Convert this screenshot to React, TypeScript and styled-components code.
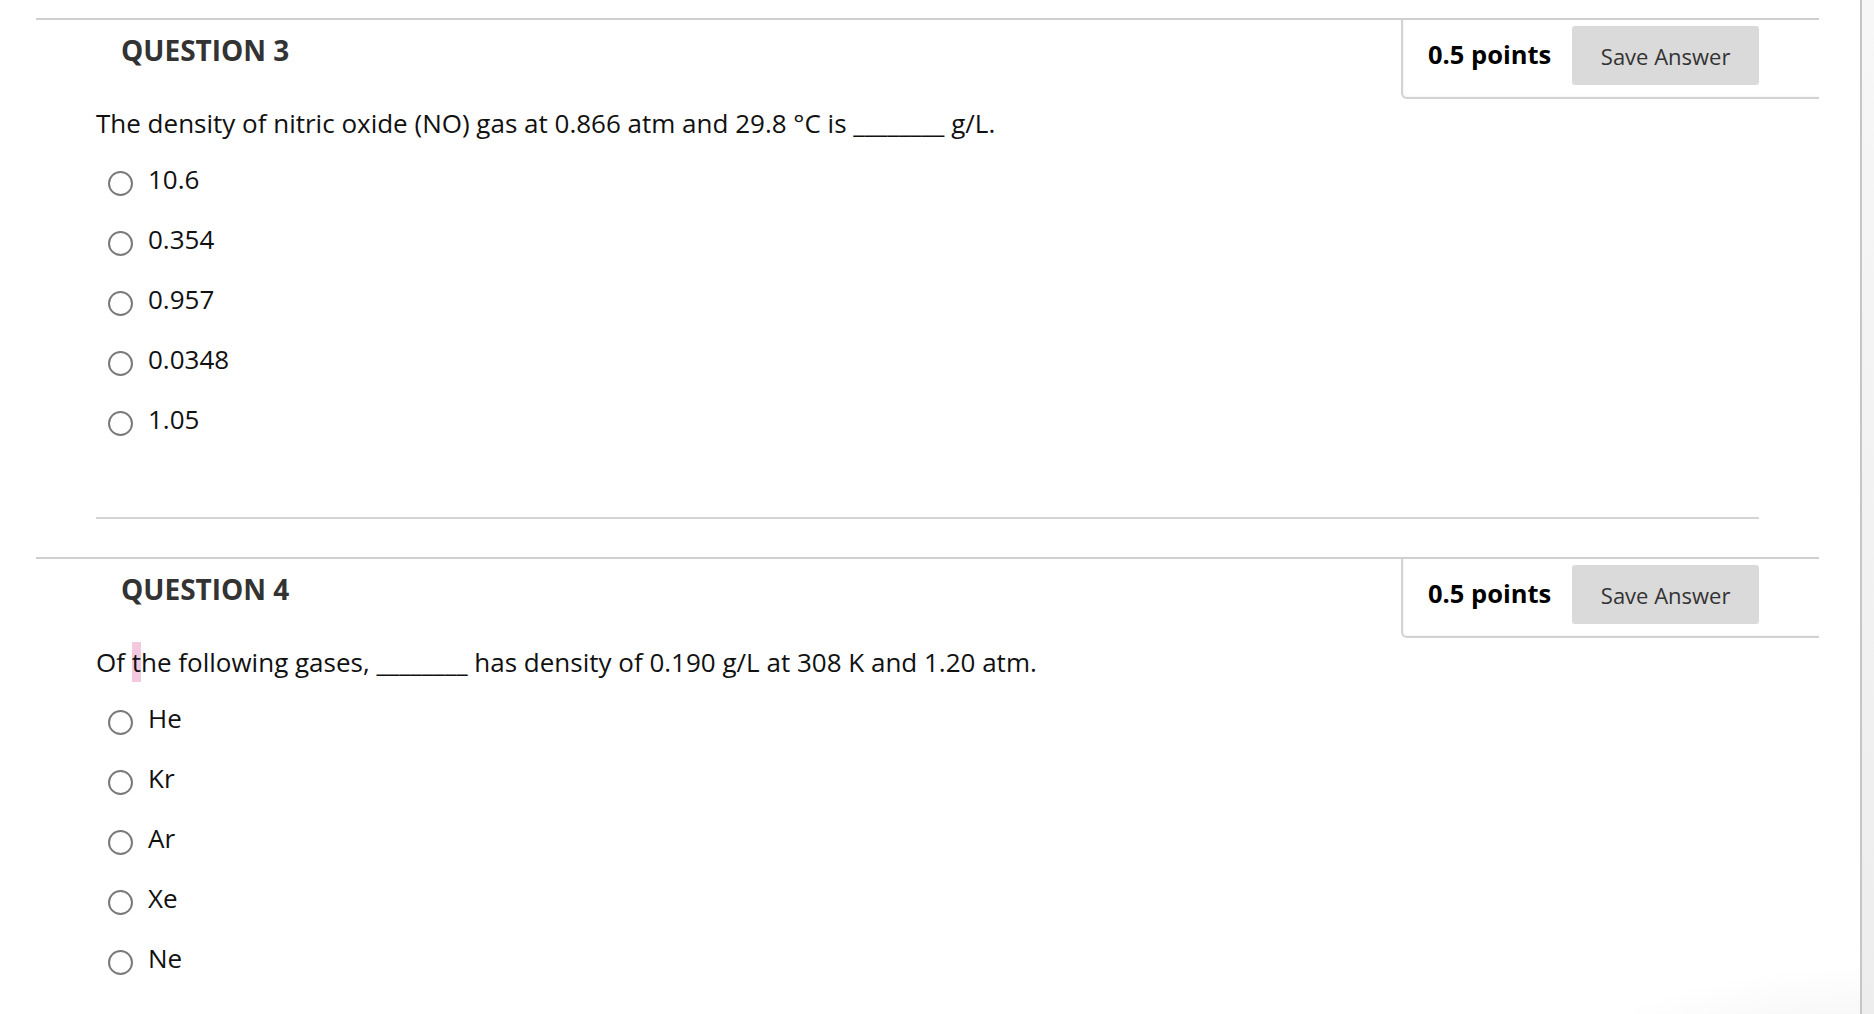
import React from 'react';
import styled, { createGlobalStyle } from 'styled-components';

const GlobalStyle = createGlobalStyle`
  html, body {
    margin: 0;
    padding: 0;
    height: 100%;
    background: #fff;
  }
  body {
    font-family: "Open Sans", "Noto Sans", Arial, sans-serif;
    color: #111;
    overflow: hidden;
  }
`;

const Page = styled.div`
  display: flex;
  height: 100vh;
  background:
    radial-gradient(ellipse 330px 130px at 100% 108%, rgba(0, 0, 0, 0.075), rgba(0, 0, 0, 0) 100%);
`;

const Main = styled.main`
  flex: 1;
  padding: 18px 41px 0 36px;
`;

const ScrollTrack = styled.div`
  width: 12px;
  border-left: 2px solid #c6c6c6;
  background: linear-gradient(#f7f7f7, #ededed);
`;

const Section = styled.section`
  border-top: 2px solid #cfcfcf;
`;

const HeaderRow = styled.div`
  display: flex;
  justify-content: space-between;
  align-items: flex-start;
`;

const Title = styled.h2`
  margin: 0;
  padding: 12px 0 0 85px;
  font-size: 28px;
  line-height: 36px;
  font-weight: 700;
  color: #333;
`;

const PointsBox = styled.div`
  width: 418px;
  box-sizing: border-box;
  display: flex;
  align-items: center;
  gap: 21px;
  padding: 6px 60px 12px 25px;
  border-left: 2px solid #d2d2d2;
  border-bottom: 2px solid #d2d2d2;
  border-bottom-left-radius: 6px;
  box-shadow: inset 1px -1px 2px rgba(0, 0, 0, 0.04);
`;

const Points = styled.span`
  margin-bottom: 4px;
  font-size: 25.5px;
  font-weight: 700;
  color: #000;
  white-space: nowrap;
`;

const SaveButton = styled.button`
  width: 189px;
  height: 59px;
  border: none;
  border-radius: 3px;
  background: #dadada;
  color: #333;
  font-family: inherit;
  font-size: 22px;
  cursor: pointer;
`;

const Prompt = styled.p`
  margin: 6px 0 0 60px;
  font-size: 26px;
  line-height: 36px;
  color: #111;
`;

const Mark = styled.span`
  background: #f4c8de;
  padding: 2px 0;
`;

const Options = styled.ul`
  list-style: none;
  margin: 20px 0 0 72px;
  padding: 0;
  display: flex;
  flex-direction: column;
  gap: 24px;
`;

const Option = styled.li`
  display: flex;
  align-items: flex-start;
  gap: 15px;
  height: 36px;
  font-size: 26px;
  line-height: 36px;
  color: #111;
`;

const Radio = styled.span`
  flex: none;
  width: 25px;
  height: 25px;
  margin-top: 10px;
  box-sizing: border-box;
  border: 2px solid #7a7a7a;
  border-radius: 50%;
  background: #fff;
`;

const Divider = styled.hr`
  margin: 80px 60px 38px 60px;
  border: none;
  border-top: 2px solid #d4d4d4;
`;

type Question = {
  number: number;
  prompt: React.ReactNode;
  options: string[];
};

const questions: Question[] = [
  {
    number: 3,
    prompt: <>The density of nitric oxide (NO) gas at 0.866 atm and 29.8 °C is ________ g/L.</>,
    options: ['10.6', '0.354', '0.957', '0.0348', '1.05'],
  },
  {
    number: 4,
    prompt: (
      <>
        Of <Mark>t</Mark>he following gases, ________ has density of 0.190 g/L at 308 K and 1.20 atm.
      </>
    ),
    options: ['He', 'Kr', 'Ar', 'Xe', 'Ne'],
  },
];

const QuestionBlock: React.FC<{ q: Question; last: boolean }> = ({ q, last }) => (
  <Section>
    <HeaderRow>
      <Title>QUESTION {q.number}</Title>
      <PointsBox>
        <Points>0.5 points</Points>
        <SaveButton>Save Answer</SaveButton>
      </PointsBox>
    </HeaderRow>
    <Prompt>{q.prompt}</Prompt>
    <Options>
      {q.options.map(o => (
        <Option key={o}>
          <Radio />
          {o}
        </Option>
      ))}
    </Options>
    {!last && <Divider />}
  </Section>
);

export default function App() {
  return (
    <>
      <GlobalStyle />
      <Page>
        <Main>
          {questions.map((q, i) => (
            <QuestionBlock key={q.number} q={q} last={i === questions.length - 1} />
          ))}
        </Main>
        <ScrollTrack />
      </Page>
    </>
  );
}
